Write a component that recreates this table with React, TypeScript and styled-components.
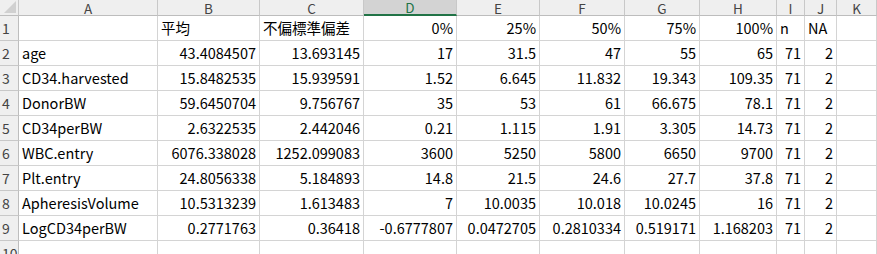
import React from 'react'
import styled, { createGlobalStyle } from 'styled-components'

const GlobalStyle = createGlobalStyle`
  html, body {
    margin: 0;
    padding: 0;
    background: #ffffff;
    overflow: hidden;
  }
  body {
    font-family: "Noto Sans CJK JP", "Noto Sans", sans-serif;
  }
`

const COLS = [19, 139, 102, 104, 93, 83, 85, 75, 77, 28, 32]
const LETTERS = ['A', 'B', 'C', 'D', 'E', 'F', 'G', 'H', 'I', 'J', 'K']
const SELECTED = 'D'

type Cell = { v: string; num?: boolean }

const t = (v: string): Cell => ({ v })
const n = (v: string): Cell => ({ v, num: true })

const ROWS: Cell[][] = [
  [t(''), t('平均'), t('不偏標準偏差'), n('0%'), n('25%'), n('50%'), n('75%'), n('100%'), t('n'), t('NA')],
  [t('age'), n('43.4084507'), n('13.693145'), n('17'), n('31.5'), n('47'), n('55'), n('65'), n('71'), n('2')],
  [t('CD34.harvested'), n('15.8482535'), n('15.939591'), n('1.52'), n('6.645'), n('11.832'), n('19.343'), n('109.35'), n('71'), n('2')],
  [t('DonorBW'), n('59.6450704'), n('9.756767'), n('35'), n('53'), n('61'), n('66.675'), n('78.1'), n('71'), n('2')],
  [t('CD34perBW'), n('2.6322535'), n('2.442046'), n('0.21'), n('1.115'), n('1.91'), n('3.305'), n('14.73'), n('71'), n('2')],
  [t('WBC.entry'), n('6076.338028'), n('1252.099083'), n('3600'), n('5250'), n('5800'), n('6650'), n('9700'), n('71'), n('2')],
  [t('Plt.entry'), n('24.8056338'), n('5.184893'), n('14.8'), n('21.5'), n('24.6'), n('27.7'), n('37.8'), n('71'), n('2')],
  [t('ApheresisVolume'), n('10.5313239'), n('1.613483'), n('7'), n('10.0035'), n('10.018'), n('10.0245'), n('16'), n('71'), n('2')],
  [t('LogCD34perBW'), n('0.2771763'), n('0.36418'), n('-0.6777807'), n('0.0472705'), n('0.2810334'), n('0.519171'), n('1.168203'), n('71'), n('2')],
  [],
]

const Sheet = styled.div`
  display: grid;
  grid-template-columns: ${COLS.map((c) => `${c}px`).join(' ')} 1fr;
  grid-auto-rows: 25px;
  grid-template-rows: 16px;
  width: 877px;
  height: 254px;
  overflow: hidden;
  font-size: 14.5px;
  color: #000;
`

const Corner = styled.div`
  position: relative;
  background: #efefef;
  border-right: 1px solid #c8c8c8;
  border-bottom: 1px solid #bdbdbd;
  box-sizing: border-box;
`

const CornerMark = styled.svg`
  position: absolute;
  right: 2px;
  bottom: 2px;
`

const ColHead = styled.div<{ $selected?: boolean }>`
  display: flex;
  align-items: center;
  justify-content: center;
  box-sizing: border-box;
  background: ${(p) => (p.$selected ? '#d3d3d3' : '#efefef')};
  color: ${(p) => (p.$selected ? '#217346' : '#444444')};
  border-right: 1px solid #c8c8c8;
  border-bottom: ${(p) => (p.$selected ? '2px solid #217346' : '1px solid #bdbdbd')};
  font-size: 13.5px;
  line-height: 14px;
  white-space: nowrap;
`

const RowHead = styled.div`
  display: flex;
  align-items: center;
  box-sizing: border-box;
  padding-left: 2px;
  background: #efefef;
  color: #444444;
  border-right: 1px solid #bdbdbd;
  border-bottom: 1px solid #c8c8c8;
  font-size: 14px;
  white-space: nowrap;
`

const Cell = styled.div<{ $num?: boolean }>`
  display: flex;
  align-items: center;
  justify-content: ${(p) => (p.$num ? 'flex-end' : 'flex-start')};
  box-sizing: border-box;
  padding: 0 3px;
  border-right: 1px solid #d4d4d4;
  border-bottom: 1px solid #d4d4d4;
  white-space: nowrap;
  line-height: 1;
`

export default function App() {
  return (
    <>
      <GlobalStyle />
      <Sheet>
        <Corner>
          <CornerMark width="12" height="12" viewBox="0 0 12 12">
            <polygon points="12,0 12,12 0,12" fill="#d0d0d0" />
          </CornerMark>
        </Corner>
        {LETTERS.map((l) => (
          <ColHead key={l} $selected={l === SELECTED}>
            {l}
          </ColHead>
        ))}
        {ROWS.map((row, r) => (
          <React.Fragment key={r}>
            <RowHead>{r + 1}</RowHead>
            {LETTERS.map((l, c) => {
              const cell = row[c]
              return (
                <Cell key={l} $num={cell?.num}>
                  {cell?.v}
                </Cell>
              )
            })}
          </React.Fragment>
        ))}
      </Sheet>
    </>
  )
}
